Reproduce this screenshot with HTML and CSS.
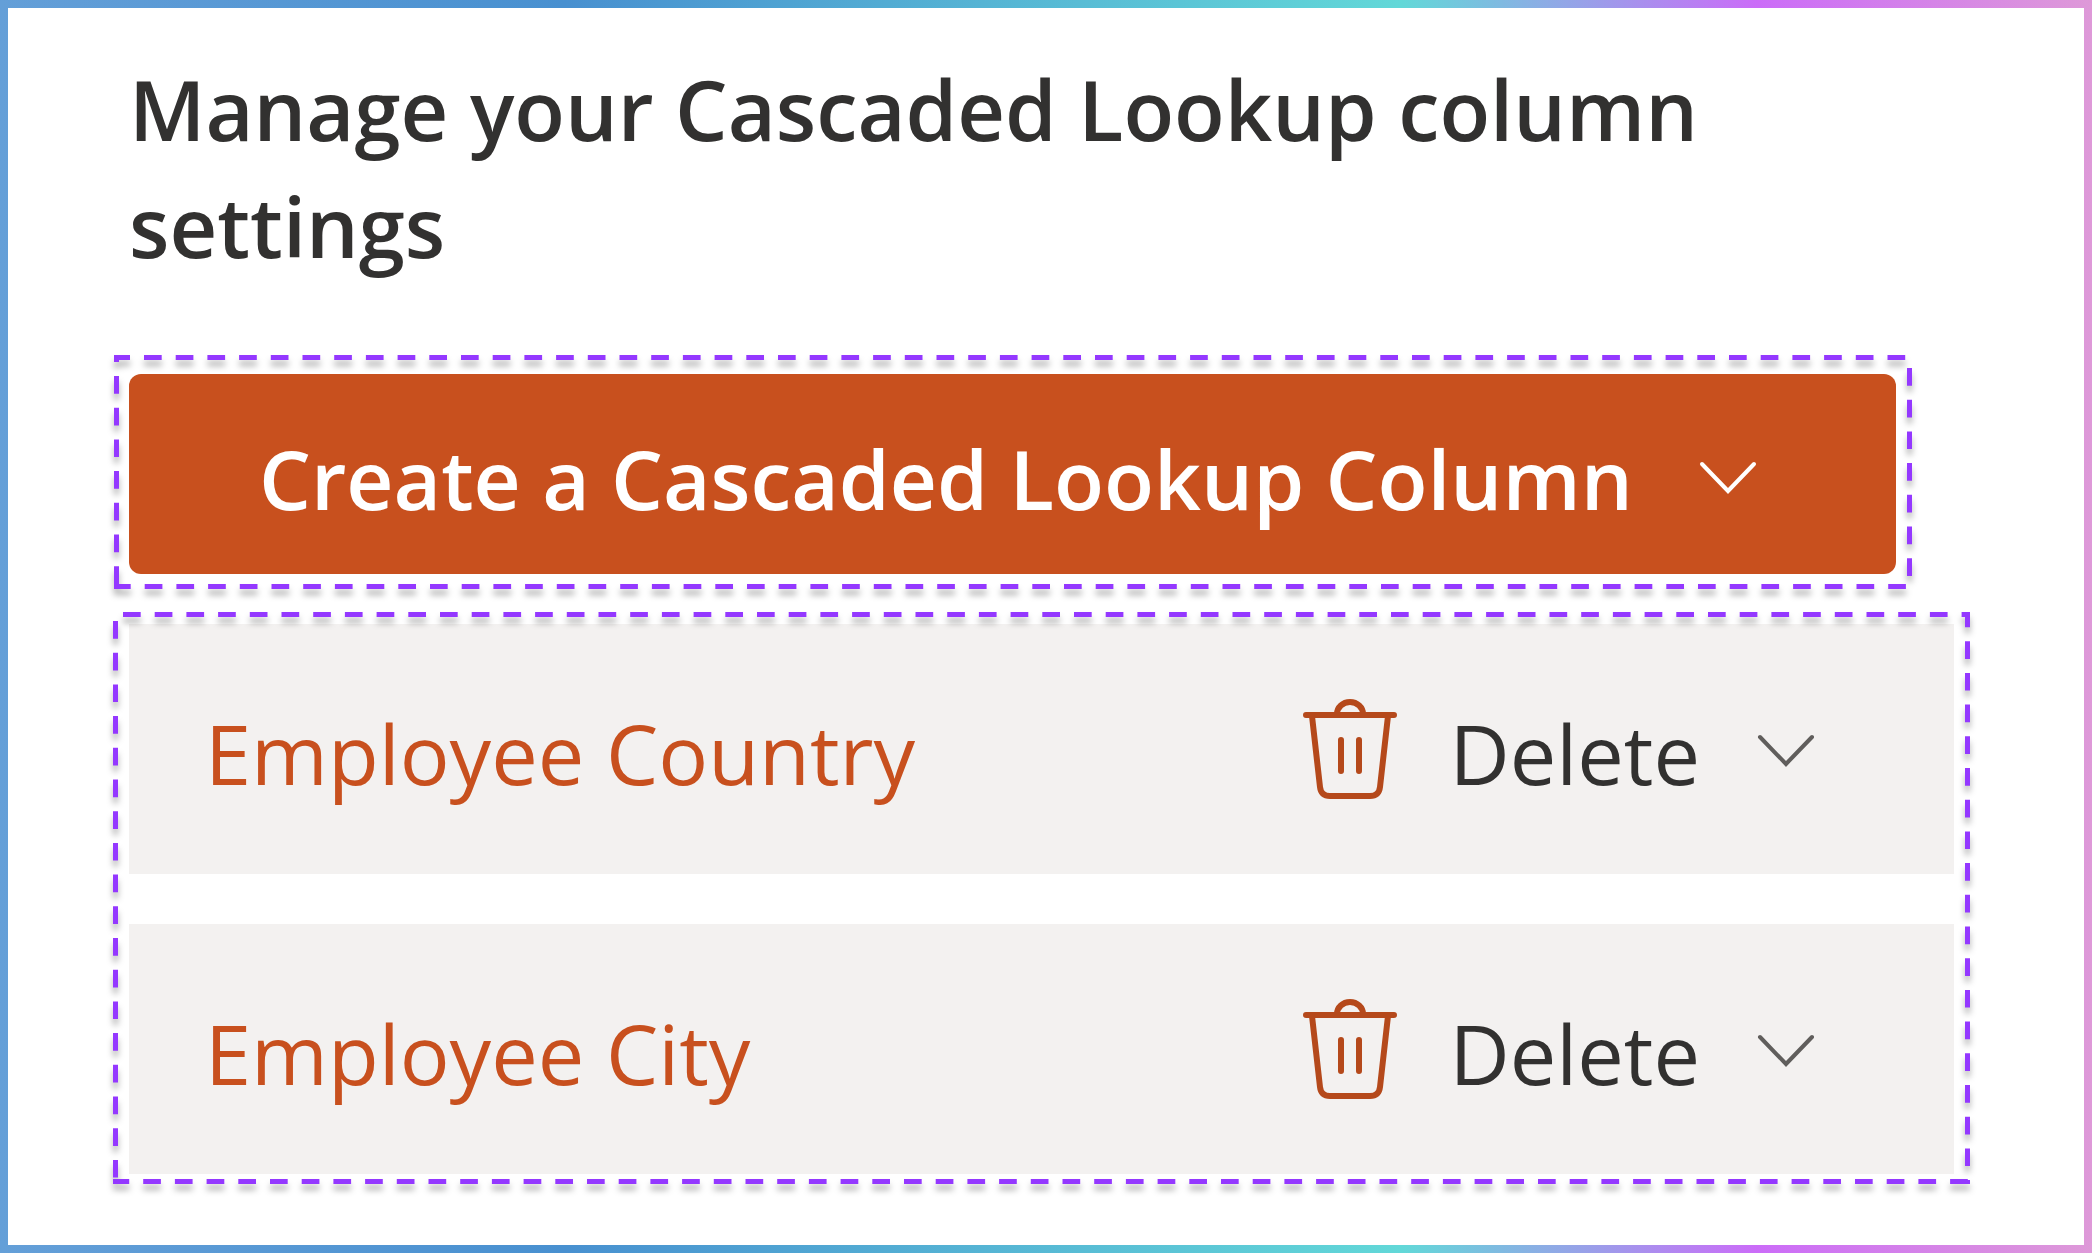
FILE: index.html
```html
<!DOCTYPE html>
<html lang="en">
<head>
<meta charset="utf-8">
<meta name="viewport" content="width=device-width, initial-scale=1">
<title>Cascaded Lookup column settings</title>
<link rel="stylesheet" href="styles.css">
</head>
<body>
<main class="panel">
  <h1 class="title">Manage your Cascaded Lookup column settings</h1>

  <div class="callout callout-create">
    <button class="create" type="button">
      <span>Create a Cascaded Lookup Column</span>
      <svg class="chevron" viewBox="0 0 60 34" aria-hidden="true"><path d="M4 3 30 30 56 3"/></svg>
    </button>
    <svg class="dashes" aria-hidden="true">
      <line x1="0" y1="2.5" x2="100%" y2="2.5" stroke-dashoffset="1.7"/>
      <line x1="2.5" y1="0" x2="2.5" y2="100%" stroke-dashoffset="10.7"/>
      <svg class="edge" x="100%"><line x1="-2.5" y1="0" x2="-2.5" y2="100%" stroke-dashoffset="18.7"/></svg>
      <svg class="edge" y="100%"><line x1="0" y1="-2.5" x2="100%" y2="-2.5" stroke-dashoffset="1"/></svg>
    </svg>
  </div>

  <div class="callout callout-list">
    <ul class="columns">
      <li class="column">
        <a class="name" href="#country">Employee Country</a>
        <button class="delete" type="button">
          <svg class="trash" viewBox="0 0 94 100" aria-hidden="true"><path d="M3 16H91M34 15a13 12 0 0 1 26 0M9 17 17 88Q18 97 27 97H67Q76 97 77 88L85 17M38 41V72M56 41V72"/></svg>
          <span>Delete</span>
        </button>
        <button class="more" type="button" aria-label="More options for Employee Country">
          <svg class="chevron" viewBox="0 0 60 34" aria-hidden="true"><path d="M4 3 30 30 56 3"/></svg>
        </button>
      </li>
      <li class="column">
        <a class="name" href="#city">Employee City</a>
        <button class="delete" type="button">
          <svg class="trash" viewBox="0 0 94 100" aria-hidden="true"><path d="M3 16H91M34 15a13 12 0 0 1 26 0M9 17 17 88Q18 97 27 97H67Q76 97 77 88L85 17M38 41V72M56 41V72"/></svg>
          <span>Delete</span>
        </button>
        <button class="more" type="button" aria-label="More options for Employee City">
          <svg class="chevron" viewBox="0 0 60 34" aria-hidden="true"><path d="M4 3 30 30 56 3"/></svg>
        </button>
      </li>
    </ul>
    <svg class="dashes" aria-hidden="true">
      <line x1="0" y1="2.5" x2="100%" y2="2.5" stroke-dashoffset="21.7"/>
      <line x1="2.5" y1="0" x2="2.5" y2="100%" stroke-dashoffset="22.7"/>
      <svg class="edge" x="100%"><line x1="-2.5" y1="0" x2="-2.5" y2="100%" stroke-dashoffset="2.5"/></svg>
      <svg class="edge" y="100%"><line x1="0" y1="-2.5" x2="100%" y2="-2.5" stroke-dashoffset="1.5"/></svg>
    </svg>
  </div>
</main>
</body>
</html>
```
FILE: styles.css
```css
* {
  box-sizing: border-box;
}

body {
  margin: 0;
  background: #fff;
  color: #323130;
  font-family: "Segoe UI", "Open Sans", "Noto Sans", sans-serif;
  font-size: 83px;
}

.panel {
  min-height: 100vh;
  padding: 42px 114px 60px 105px;
  border: 8px solid;
  border-image: linear-gradient(to right, #649fd8, #4890d0 27%, #62d8d8 67%, #cb6cf8 84%, #de99d8) 8;
}

.title {
  margin: 0 16px 71px;
  max-width: 1640px;
  font-size: 83px;
  font-weight: 600;
  line-height: 117px;
}

button {
  display: flex;
  align-items: center;
  padding: 0;
  border: 0;
  background: none;
  color: inherit;
  font: inherit;
  cursor: pointer;
}

.callout {
  position: relative;
}

.callout-create {
  margin: 0 58px 23px 1px;
  padding: 19px 16px 15px 15px;
}

.callout-list {
  padding: 12px 16px 10px;
}

.dashes {
  position: absolute;
  inset: 0;
  width: 100%;
  height: 100%;
  overflow: visible;
  pointer-events: none;
  stroke: #9438ff;
  stroke-width: 5;
  stroke-dasharray: 17.7 14;
  filter: drop-shadow(0 6px 3px rgba(0, 0, 0, 0.3));
}

.edge {
  overflow: visible;
}

.create {
  width: 100%;
  height: 200px;
  padding: 8px 138px 0 130px;
  justify-content: space-between;
  border-radius: 12px;
  background: #c8501e;
  color: #fff;
  font-size: 82px;
  font-weight: 600;
  white-space: nowrap;
}

.columns {
  display: grid;
  gap: 50px;
  margin: 0;
  padding: 0;
  list-style: none;
}

.column {
  display: flex;
  align-items: center;
  height: 250px;
  padding: 0 138px 0 76px;
  background: #f3f1f0;
}

.name {
  margin-right: auto;
  padding-top: 6px;
  color: #c8501e;
  text-decoration: none;
}

.delete {
  gap: 52px;
}

.delete span {
  padding-top: 6px;
}

.more {
  margin-left: 56px;
  padding-top: 4px;
}

.chevron,
.trash {
  display: block;
  flex: none;
  fill: none;
  stroke: currentColor;
  stroke-linecap: round;
}

.chevron {
  width: 60px;
  height: 34px;
  stroke-width: 4;
}

.more .chevron {
  color: #605e5c;
}

.trash {
  width: 94px;
  height: 100px;
  color: #b5491b;
  stroke-width: 6;
}
```
